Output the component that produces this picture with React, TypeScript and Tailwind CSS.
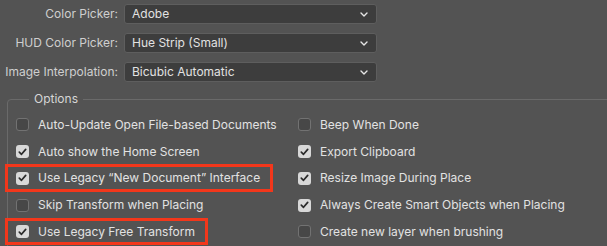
import React from "react";

type Choice = {
  label: string;
  value: string;
};

const CHOICES: Choice[] = [
  { label: "Color Picker:", value: "Adobe" },
  { label: "HUD Color Picker:", value: "Hue Strip (Small)" },
  { label: "Image Interpolation:", value: "Bicubic Automatic" },
];

type Option = {
  label: string;
  checked: boolean;
  flagged?: boolean;
};

const LEFT: Option[] = [
  { label: "Auto-Update Open File-based Documents", checked: false },
  { label: "Auto show the Home Screen", checked: true },
  { label: "Use Legacy \u201cNew Document\u201d Interface", checked: true, flagged: true },
  { label: "Skip Transform when Placing", checked: false },
  { label: "Use Legacy Free Transform", checked: true, flagged: true },
];

const RIGHT: Option[] = [
  { label: "Beep When Done", checked: false },
  { label: "Export Clipboard", checked: true },
  { label: "Resize Image During Place", checked: true },
  { label: "Always Create Smart Objects when Placing", checked: true },
  { label: "Create new layer when brushing", checked: false },
];

function Chevron() {
  return (
    <svg width="8" height="5" viewBox="0 0 8 5" className="text-[#e6e6e6]">
      <path d="M1 1 L4 4 L7 1" fill="none" stroke="currentColor" strokeWidth="1.4" strokeLinecap="round" strokeLinejoin="round" />
    </svg>
  );
}

function Checkbox({ checked }: { checked: boolean }) {
  if (checked) {
    return (
      <span className="flex h-[13px] w-[13px] shrink-0 items-center justify-center rounded-[3px] bg-[#d8d8d8]">
        <svg width="9" height="8" viewBox="0 0 9 8">
          <path d="M1.3 4.2 L3.5 6.3 L7.7 1.4" fill="none" stroke="#2a2a2a" strokeWidth="1.7" strokeLinecap="round" strokeLinejoin="round" />
        </svg>
      </span>
    );
  }
  return (
    <span className="h-[13px] w-[13px] shrink-0 rounded-[3px] border border-[#727272] bg-[#474747]" />
  );
}

function OptionRow({ option }: { option: Option }) {
  return (
    <div className="relative flex h-[26.75px] w-fit items-center gap-[9px]">
      <Checkbox checked={option.checked} />
      <span className="whitespace-nowrap">{option.label}</span>
      {option.flagged && (
        <span className="pointer-events-none absolute -left-[11px] -right-[13px] -top-[1px] bottom-0 border-[3px] border-[#f3371b]" />
      )}
    </div>
  );
}

export default function App() {
  return (
    <div
      className="h-[246px] w-[607px] overflow-hidden bg-[#535353] text-[12px] text-[#e2e2e2]"
      style={{ fontFamily: "Inter, 'Liberation Sans', sans-serif" }}
    >
      <div className="flex flex-col gap-[9px] pt-[4px]">
        {CHOICES.map((c) => (
          <div key={c.label} className="flex items-center gap-[6px]">
            <span className="w-[118px] whitespace-nowrap text-right text-[#cfcfcf]">{c.label}</span>
            <div className="flex h-[20px] w-[253px] items-center justify-between rounded-[3px] border border-[#5e5e5e] bg-[#3d3d3d] pl-[7px] pr-[8px]">
              <span>{c.value}</span>
              <Chevron />
            </div>
          </div>
        ))}
      </div>

      <fieldset className="ml-[7px] mt-[8px] w-[640px] rounded-[4px] border border-[#6a6a6a] pb-[10px] pl-[8px]">
        <legend className="ml-[13px] px-[5px] text-[#d6d6d6]">Options</legend>
        <div className="grid grid-cols-[282px_1fr] pt-[3.5px]">
          <div className="flex flex-col">
            {LEFT.map((o) => (
              <OptionRow key={o.label} option={o} />
            ))}
          </div>
          <div className="flex flex-col">
            {RIGHT.map((o) => (
              <OptionRow key={o.label} option={o} />
            ))}
          </div>
        </div>
      </fieldset>
    </div>
  );
}
